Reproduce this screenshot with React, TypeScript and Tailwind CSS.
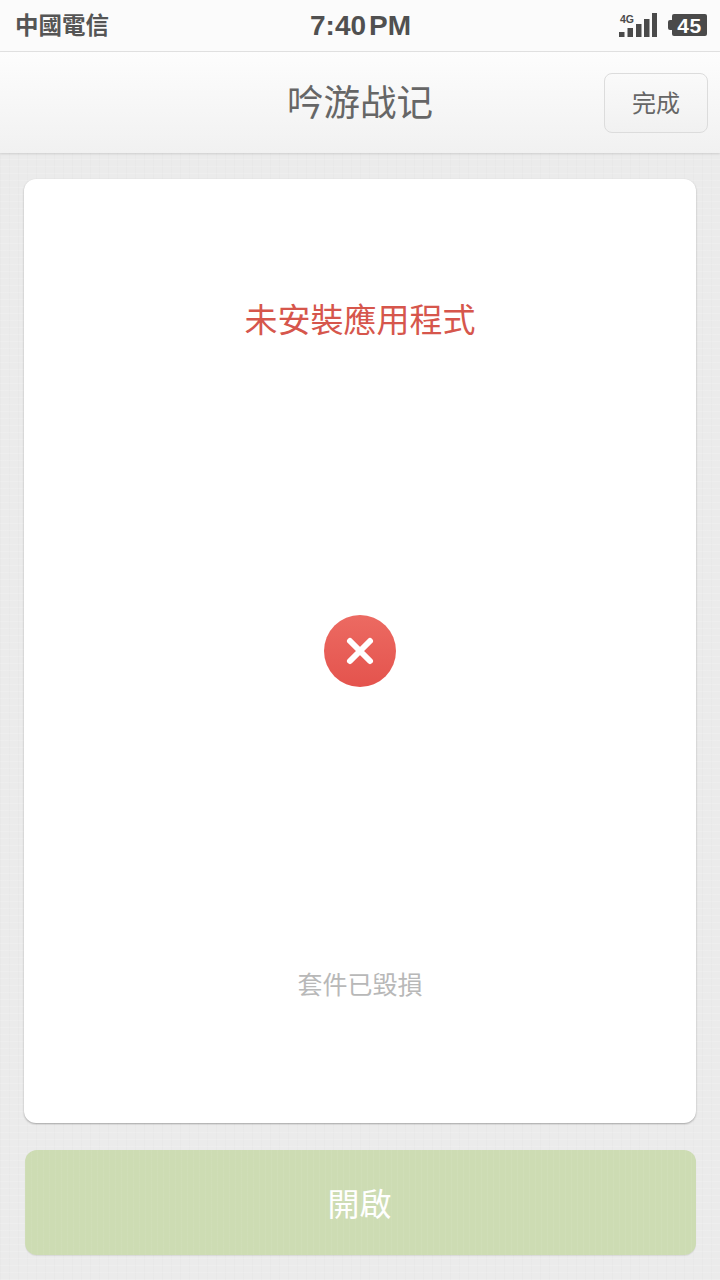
const CJK = "font-['Noto_Sans_CJK_TC','Noto_Sans_CJK_SC',sans-serif]";

function SignalIcon() {
  return (
    <svg width="38" height="24" viewBox="0 0 38 24" aria-hidden="true" className="block">
      <rect x="0" y="19" width="5.5" height="5" fill="#4a4a4a" />
      <rect x="8.5" y="15" width="5.5" height="9" fill="#4a4a4a" />
      <rect x="17" y="11" width="5.5" height="13" fill="#4a4a4a" />
      <rect x="25" y="6" width="5.5" height="18" fill="#4a4a4a" />
      <rect x="33" y="0" width="5" height="24" fill="#4a4a4a" />
    </svg>
  );
}

function StatusBar() {
  return (
    <div className="relative flex h-[52px] shrink-0 items-center justify-between border-b border-[#e2e2e2] bg-[#fbfbfb] pl-[15px] pr-[13px]">
      <span className={`${CJK} mt-[-2px] text-[23.5px] font-bold leading-none text-[#555555]`}>中國電信</span>
      <span className="absolute left-[310px] top-[12px] flex font-['Liberation_Sans',sans-serif] text-[28px] font-bold leading-none text-[#505050]">
        7:40<span className="ml-[3px]">PM</span>
      </span>
      <div className="flex items-center gap-[11px]">
        <div className="relative mt-[-2px] h-[24px] w-[38px]">
          <span className="absolute left-[1px] top-[1px] font-['Liberation_Sans',sans-serif] text-[10.5px] font-bold leading-none text-[#4a4a4a]">4G</span>
          <SignalIcon />
        </div>
        <div className="mt-[-1px] flex items-center">
          <div className="h-[10px] w-[4px] rounded-l-[2px] bg-[#4a4a4a]" />
          <div className="flex h-[22px] w-[35px] items-center justify-center rounded-[2px] bg-[#4a4a4a] font-['Liberation_Sans',sans-serif] text-[21px] font-bold leading-none tracking-[0.5px] text-white">
            45
          </div>
        </div>
      </div>
    </div>
  );
}

function NavBar() {
  return (
    <div className="relative z-10 flex h-[101px] shrink-0 items-center justify-center bg-gradient-to-b from-[#fdfdfd] to-[#f1f1f1] shadow-[0_1px_2px_rgba(0,0,0,0.12)]">
      <h1 className={`${CJK} mt-[-2px] text-[36.5px] font-normal leading-none text-[#666666]`}>吟游战记</h1>
      <button className={`${CJK} absolute left-[604px] top-[21px] flex h-[60px] w-[104px] items-center justify-center rounded-[8px] border border-[#dcdcdc] bg-gradient-to-b from-[#fafafa] to-[#f1f1f1] pb-[2px] text-[24px] leading-none text-[#666666]`}>
        完成
      </button>
    </div>
  );
}

export default function App() {
  return (
    <div className="flex h-[1280px] w-[720px] flex-col overflow-hidden bg-[#ebebeb] bg-[repeating-linear-gradient(0deg,rgba(255,255,255,0.14)_0px,rgba(255,255,255,0.14)_1px,transparent_1px,transparent_7px),repeating-linear-gradient(90deg,rgba(0,0,0,0.012)_0px,rgba(0,0,0,0.012)_1px,transparent_1px,transparent_9px)]">
      <StatusBar />
      <NavBar />
      <main className="flex flex-1 flex-col pl-[24px] pr-[24px] pt-[26px]">
        <section className="flex h-[944px] flex-col items-center rounded-[12px] bg-white shadow-[0_1px_2px_rgba(0,0,0,0.3)]">
          <h2 className={`${CJK} mt-[120px] text-[33px] font-normal leading-[38px] text-[#d6564c]`}>未安裝應用程式</h2>
          <div className="mt-[278px] flex h-[72px] w-[72px] items-center justify-center rounded-full bg-gradient-to-b from-[#ec6a62] to-[#e4534d]">
            <svg width="30" height="30" viewBox="0 0 30 30" aria-hidden="true">
              <path d="M5 5 L25 25 M25 5 L5 25" stroke="#fff" strokeWidth="6" strokeLinecap="round" />
            </svg>
          </div>
          <p className={`${CJK} mt-[280px] text-[25px] leading-[32px] text-[#b8b8b8]`}>套件已毀損</p>
        </section>
        <button className={`${CJK} ml-[1px] mt-[27px] flex h-[105px] items-center justify-center rounded-[12px] bg-[#cddcb3] bg-[repeating-linear-gradient(90deg,rgba(255,255,255,0.05)_0px,rgba(255,255,255,0.05)_1px,transparent_1px,transparent_6px)] pb-[2px] pr-[2px] text-[32px] leading-none text-white shadow-[0_1px_1px_rgba(0,0,0,0.08)]`}>
          開啟
        </button>
      </main>
    </div>
  );
}
